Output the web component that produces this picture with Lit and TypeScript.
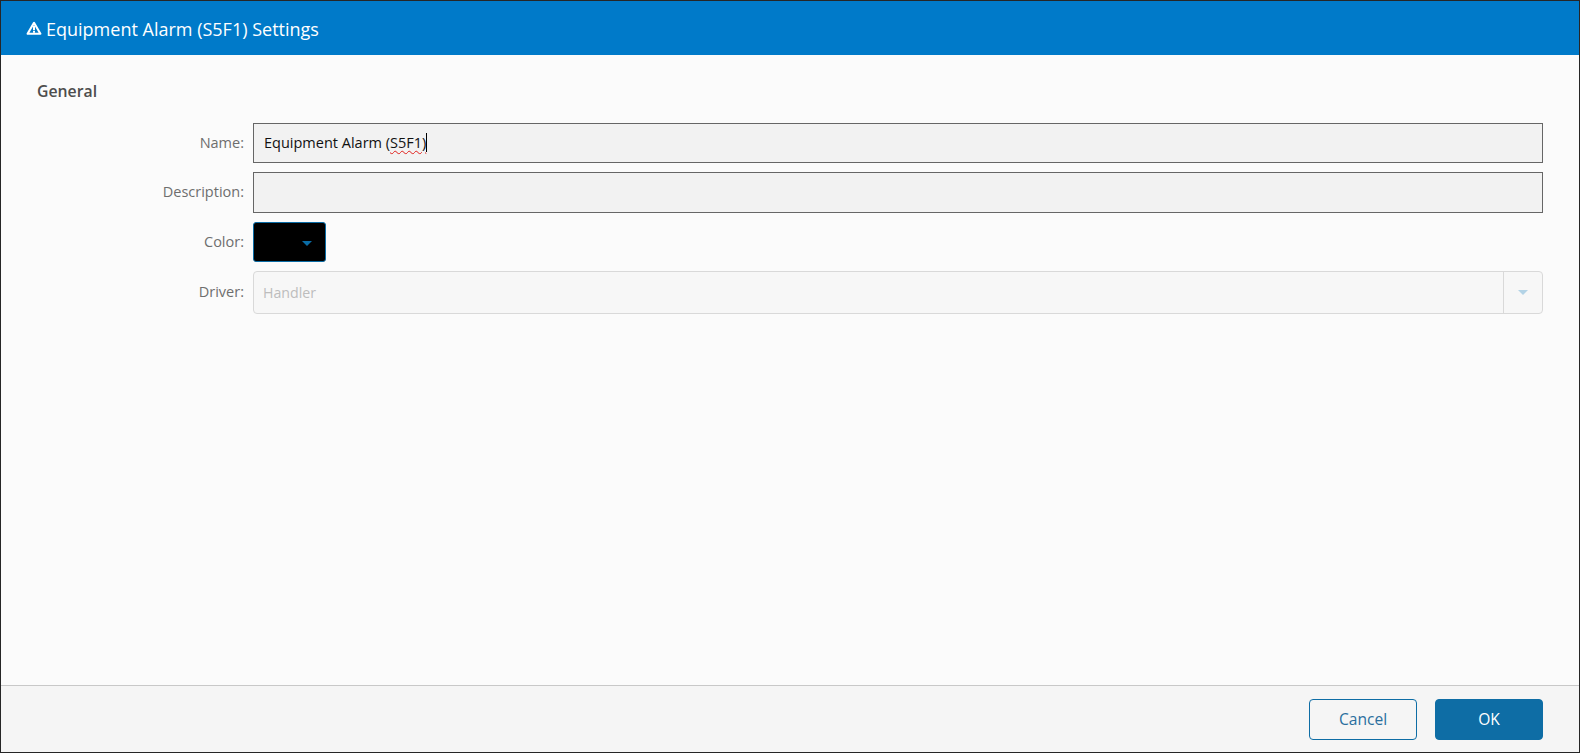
import { LitElement, html, css } from 'lit';
import { customElement } from 'lit/decorators.js';

const caret = html`<svg class="arrow" width="10" height="5" viewBox="0 0 10 5"><path d="M0 0h10L5 5z" fill="currentColor"></path></svg>`;

@customElement('app-root')
export class AppRoot extends LitElement {
  static styles = css`
    :host {
      display: block;
      height: 753px;
      font-family: 'Open Sans', sans-serif;
      font-size: 14.5px;
    }
    .dialog {
      box-sizing: border-box;
      height: 753px;
      display: flex;
      flex-direction: column;
      border: 1px solid #262626;
      background: #fbfbfb;
    }
    .title {
      box-sizing: border-box;
      height: 54px;
      flex: none;
      display: flex;
      align-items: center;
      gap: 4px;
      padding: 1px 0 0 25px;
      background: #007ac9;
      color: #fff;
      font-size: 18px;
    }
    .title svg {
      display: block;
      margin-top: -1px;
    }
    .body {
      flex: 1;
      padding: 27px 36px 0 36px;
    }
    h2 {
      margin: 0 0 22px;
      font-size: 15.8px;
      line-height: 19px;
      font-weight: 600;
      color: #4d4d4d;
    }
    .form {
      display: grid;
      grid-template-columns: 207px 1fr;
      column-gap: 9px;
      row-gap: 9px;
      align-items: center;
    }
    label {
      margin-bottom: 2px;
      text-align: right;
      color: #6e6e6e;
      line-height: 19px;
    }
    .input {
      box-sizing: border-box;
      height: 40px;
      display: flex;
      align-items: center;
      padding: 0 0 2px 10px;
      border: 1px solid #666;
      background: #f2f2f2;
      color: #111;
    }
    .spell {
      text-decoration: underline wavy #e0201c 1px;
      text-underline-offset: 2px;
    }
    .cursor {
      width: 1px;
      height: 19px;
      background: #000;
    }
    .desc {
      height: 41px;
    }
    .color {
      box-sizing: border-box;
      width: 73px;
      height: 40px;
      display: flex;
      align-items: center;
      justify-content: flex-end;
      padding: 2px 13px 0 0;
      border: 1px solid #0a6ca5;
      border-radius: 3px;
      background: #000;
      color: #0a6ca5;
    }
    .select {
      box-sizing: border-box;
      height: 43px;
      display: flex;
      border: 1px solid #d9d9d9;
      border-radius: 4px;
      background: #f7f7f7;
      color: #bdbdbd;
    }
    .select span {
      flex: 1;
      align-self: center;
      padding-left: 9px;
      font-size: 14.2px;
    }
    .select div {
      width: 38px;
      display: flex;
      align-items: center;
      justify-content: center;
      border-left: 1px solid #d9d9d9;
      color: #b3d3e6;
    }
    .footer {
      box-sizing: border-box;
      height: 67px;
      flex: none;
      display: flex;
      justify-content: flex-end;
      align-items: flex-start;
      gap: 18px;
      padding: 13px 36px 0 0;
      border-top: 1px solid #c8c8c8;
      background: #f5f5f5;
    }
    button {
      box-sizing: border-box;
      width: 108px;
      height: 41px;
      padding: 0 0 1px;
      border: 1px solid #0e6da5;
      border-radius: 4px;
      font: inherit;
      font-size: 15.6px;
      color: #2a6f9e;
      background: transparent;
    }
    button.primary {
      background: #0e6da5;
      color: #fff;
    }
  `;

  render() {
    return html`
      <div class="dialog">
        <header class="title">
          <svg width="16" height="15" viewBox="0 0 16 15">
            <path d="M8 1.8 1.6 12.8h12.8z" fill="none" stroke="#fff" stroke-width="2.1" stroke-linejoin="round"></path>
            <path d="M7 4.8h2v4.4H7zM7 10h2v1.8H7z" fill="#fff"></path>
          </svg>
          Equipment Alarm (S5F1) Settings
        </header>
        <main class="body">
          <h2>General</h2>
          <div class="form">
            <label>Name:</label>
            <div class="input">Equipment Alarm (<span class="spell">S5F1)</span><i class="cursor"></i></div>
            <label>Description:</label>
            <div class="input desc"></div>
            <label>Color:</label>
            <div class="color">${caret}</div>
            <label>Driver:</label>
            <div class="select"><span>Handler</span><div>${caret}</div></div>
          </div>
        </main>
        <footer class="footer">
          <button>Cancel</button>
          <button class="primary">OK</button>
        </footer>
      </div>
    `;
  }
}
